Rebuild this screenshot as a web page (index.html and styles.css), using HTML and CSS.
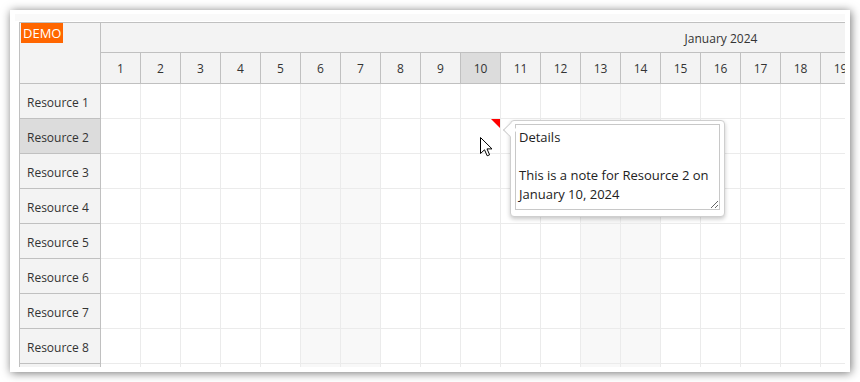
FILE: index.html
```html
<!DOCTYPE html>
<html>
<head>
<meta charset="utf-8">
<link rel="stylesheet" href="styles.css">
</head>
<body>
<div class="frame">
  <div class="band"></div>
  <div class="sched">
    <div class="head">
      <div class="corner"><span class="demo">DEMO</span></div>
      <div class="timehead">
        <div class="month">January 2024</div>
        <div class="days">
          <div class="day">1</div><div class="day">2</div><div class="day">3</div><div class="day">4</div><div class="day">5</div><div class="day">6</div><div class="day">7</div><div class="day">8</div><div class="day">9</div><div class="day sel">10</div><div class="day">11</div><div class="day">12</div><div class="day">13</div><div class="day">14</div><div class="day">15</div><div class="day">16</div><div class="day">17</div><div class="day">18</div><div class="day">19</div><div class="day">20</div><div class="day">21</div><div class="day">22</div><div class="day">23</div><div class="day">24</div><div class="day">25</div><div class="day">26</div><div class="day">27</div><div class="day">28</div><div class="day">29</div><div class="day">30</div><div class="day">31</div>
        </div>
      </div>
    </div>
    <div class="main">
      <div class="rows">
        <div class="res">Resource 1</div>
        <div class="res sel">Resource 2</div>
        <div class="res">Resource 3</div>
        <div class="res">Resource 4</div>
        <div class="res">Resource 5</div>
        <div class="res">Resource 6</div>
        <div class="res">Resource 7</div>
        <div class="res">Resource 8</div>
        <div class="res">Resource 9</div>
      </div>
      <div class="grid">
        <div class="col"></div><div class="col"></div><div class="col"></div><div class="col"></div><div class="col"></div><div class="col we"></div><div class="col we"></div><div class="col"></div><div class="col"></div><div class="col note"><span class="marker"></span></div><div class="col"></div><div class="col"></div><div class="col we"></div><div class="col we"></div><div class="col"></div><div class="col"></div><div class="col"></div><div class="col"></div><div class="col"></div><div class="col we"></div><div class="col we"></div><div class="col"></div><div class="col"></div><div class="col"></div><div class="col"></div><div class="col"></div><div class="col we"></div><div class="col we"></div><div class="col"></div><div class="col"></div><div class="col"></div>
      </div>
    </div>
  </div>
</div>
<div class="bubble">
  <textarea class="notes" readonly>Details

This is a note for Resource 2 on January 10, 2024</textarea>
</div>
<svg class="cursor" width="13" height="20" viewBox="0 0 13 20">
  <path d="M0.5 0.5 L0.5 16.5 L4.5 12.8 L7.2 18.8 L9.6 17.8 L7 11.9 L12 11.9 Z" fill="#fff" stroke="#000" stroke-width="1" stroke-linejoin="miter"/>
</svg>
</body>
</html>
```

FILE: styles.css
```css
html, body {
  margin: 0;
  padding: 0;
  background: #fff;
}
body {
  font-family: "Open Sans", "Noto Sans", sans-serif;
  font-size: 12px;
  color: #333;
  width: 860px;
  height: 382px;
  overflow: hidden;
}
.frame {
  margin: 10px;
  width: 840px;
  height: 362px;
  box-sizing: border-box;
  padding: 4px 5px 0 9px;
  background: #fff;
  box-shadow: 1px 1px 9px rgba(0, 0, 0, 0.55);
  overflow: hidden;
}
.band {
  height: 7px;
  margin-left: -4px;
  background: #f9f9f9;
  margin-bottom: 1px;
}
.sched {
  width: 826px;
  height: 345px;
  box-sizing: border-box;
  border-left: 1px solid #c0c0c0;
  border-top: 1px solid #c0c0c0;
  overflow: hidden;
}
.head {
  display: flex;
  border-bottom: 1px solid #c0c0c0;
}
.corner {
  flex: none;
  width: 80px;
  height: 60px;
  border-right: 1px solid #c0c0c0;
  background: #f3f3f3;
  display: flex;
  align-items: flex-start;
}
.demo {
  margin-left: 1px;
  background: #ff6600;
  color: #fff;
  font-size: 13px;
  line-height: 20px;
  height: 20px;
  padding: 0 2px;
}
.timehead {
  flex: none;
  width: 1240px;
}
.month {
  height: 29px;
  line-height: 31px;
  border-bottom: 1px solid #c0c0c0;
  background: #f3f3f3;
  text-align: center;
}
.days {
  display: flex;
}
.day {
  flex: none;
  width: 39px;
  height: 30px;
  line-height: 31px;
  border-right: 1px solid #c0c0c0;
  background: #f3f3f3;
  text-align: center;
}
.day.sel {
  background: #dcdcdc;
}
.main {
  display: flex;
}
.rows {
  flex: none;
  width: 80px;
  border-right: 1px solid #c0c0c0;
}
.res {
  height: 33px;
  padding-top: 1px;
  line-height: 35px;
  padding-left: 7px;
  border-bottom: 1px solid #c0c0c0;
  background: #f3f3f3;
  overflow: hidden;
}
.res.sel {
  background: #dcdcdc;
}
.grid {
  display: flex;
  flex: none;
}
.col {
  flex: none;
  width: 39px;
  height: 315px;
  border-right: 1px solid #ebebeb;
  background-image: repeating-linear-gradient(to bottom, transparent 0, transparent 34px, #ebebeb 34px, #ebebeb 35px);
}
.col.we {
  background-color: #f8f8f8;
}
.col.note {
  position: relative;
}
.marker {
  position: absolute;
  top: 35px;
  right: 0;
  width: 0;
  height: 0;
  border-top: 9px solid #ff0000;
  border-left: 9px solid transparent;
}
.bubble {
  position: absolute;
  left: 510px;
  top: 120px;
  width: 215px;
  height: 97px;
  box-sizing: border-box;
  padding: 3px 4px;
  background: #fff;
  border: 1px solid #cfcfcf;
  border-radius: 4px;
  box-shadow: 0 2px 4px rgba(0, 0, 0, 0.22);
}
.bubble::before {
  content: "";
  position: absolute;
  left: -6px;
  top: 4px;
  width: 10px;
  height: 10px;
  box-sizing: border-box;
  background: #fff;
  border-left: 1px solid #cfcfcf;
  border-bottom: 1px solid #cfcfcf;
  transform: rotate(45deg);
}
.notes {
  display: block;
  margin: 0;
  width: 205px;
  height: 86px;
  box-sizing: border-box;
  padding: 3px 3px 1px;
  border: 1px solid #c8c8c8;
  font-family: "Open Sans", "Noto Sans", sans-serif;
  font-size: 13px;
  line-height: 19px;
  color: #222;
  background: #fff;
  overflow: hidden;
  resize: both;
  outline: none;
}
.cursor {
  position: absolute;
  left: 480px;
  top: 137px;
}
```
